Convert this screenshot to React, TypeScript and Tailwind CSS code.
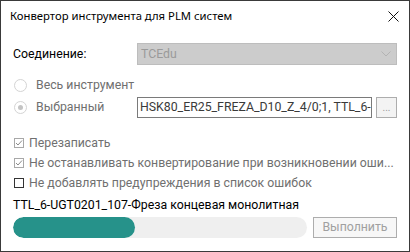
import React from "react";

const roboto = { fontFamily: "Roboto, 'Noto Sans', sans-serif" };

function Radio({ checked }: { checked?: boolean }) {
  return (
    <span className="w-[13px] h-[13px] rounded-full border border-[#d4d4d4] bg-white flex items-center justify-center shrink-0">
      {checked && <span className="w-[5px] h-[5px] rounded-full bg-[#c4c4c4]" />}
    </span>
  );
}

function Check({ checked, enabled }: { checked?: boolean; enabled?: boolean }) {
  return (
    <span
      className={`w-[10px] h-[10px] border flex items-center justify-center shrink-0 bg-white ${
        enabled ? "border-[#333333]" : "border-[#a8a8a8]"
      }`}
    >
      {checked && (
        <svg width="8" height="8" viewBox="0 0 8 8">
          <path d="M1 4 L3 6 L7 1.5" fill="none" stroke="#8a8a8a" strokeWidth="1" />
        </svg>
      )}
    </span>
  );
}

export default function App() {
  return (
    <div
      className="w-[410px] h-[252px] bg-white border border-[#3a3a3a] flex flex-col text-[12.3px] overflow-hidden"
      style={roboto}
    >
      {/* title bar */}
      <div className="h-[30px] flex items-center justify-between pl-[9px] pr-[10px] shrink-0">
        <span
          className="text-[11.3px] text-black"
          style={{ fontFamily: "'Noto Sans', 'Open Sans', sans-serif" }}
        >
          Конвертор инструмента для PLM систем
        </span>
        <svg width="11" height="11" viewBox="0 0 11 11">
          <path d="M0.5 0.5 L10.5 10.5 M10.5 0.5 L0.5 10.5" stroke="#111" strokeWidth="1" />
        </svg>
      </div>

      <div className="px-[12px] flex flex-col">
        {/* connection */}
        <div className="mt-[12px] flex items-center h-[22px]">
          <span className="w-[124px] shrink-0 text-black">Соединение:</span>
          <div className="flex-1 h-[22px] bg-[#cccccc] border border-[#bdbdbd] flex items-center justify-between pl-[3px] pr-[5px]">
            <span className="text-[#9a9a9a]">TCEdu</span>
            <svg width="10" height="6" viewBox="0 0 10 6">
              <path d="M0.5 0.5 L5 5 L9.5 0.5" fill="none" stroke="#b3b3b3" strokeWidth="1" />
            </svg>
          </div>
        </div>

        {/* radios */}
        <div className="mt-[10px] h-[20px] flex items-center pl-[1px]">
          <Radio />
          <span className="ml-[9px] text-[#6f6f6f]">Весь инструмент</span>
        </div>
        <div className="mt-[2px] h-[21px] flex items-center pl-[1px]">
          <Radio checked />
          <span className="ml-[9px] w-[101px] shrink-0 text-[#6f6f6f]">Выбранный</span>
          <div className="w-[235px] shrink-0 h-[21px] border border-[#7a7a7a] flex items-center pl-[2px] overflow-hidden whitespace-nowrap text-[#3a3a3a]">
            HSK80_ER25_FREZA_D10_Z_4/0;1, TTL_6-2
          </div>
          <div className="ml-[4px] w-[21px] shrink-0 h-[21px] border border-[#adadad] bg-[#f3f3f3] flex items-end justify-center pb-[4px] text-[#9a9a9a] text-[10px] leading-none">
            ...
          </div>
        </div>

        {/* checkboxes */}
        <div className="mt-[15px] h-[20px] flex items-center pl-[1px]">
          <Check checked />
          <span className="ml-[5px] text-[#707070]">Перезаписать</span>
        </div>
        <div className="h-[20px] flex items-center pl-[1px]">
          <Check checked />
          <span className="ml-[5px] text-[#707070] whitespace-nowrap">
            Не останавливать конвертирование при возникновении оши...
          </span>
        </div>
        <div className="h-[20px] flex items-center pl-[1px]">
          <Check enabled />
          <span className="ml-[5px] text-[#707070] whitespace-nowrap">
            Не добавлять предупреждения в список ошибок
          </span>
        </div>

        {/* status */}
        <div className="mt-[4px] h-[16px] leading-[16px] text-black whitespace-nowrap">
          TTL_6-UGT0201_107-Фреза концевая монолитная
        </div>

        <div className="mt-[4px] flex items-center h-[21px]">
          <div className="w-[294px] h-[21px] rounded-full bg-[#efefef] overflow-hidden">
            <div className="h-full rounded-full bg-[#26928a]" style={{ width: "41.5%" }} />
          </div>
          <div className="ml-[6px] w-[84px] h-[21px] border border-[#adadad] bg-[#f7f7f7] flex items-center justify-center text-[#a0a0a0]">
            Выполнить
          </div>
        </div>
      </div>
    </div>
  );
}
